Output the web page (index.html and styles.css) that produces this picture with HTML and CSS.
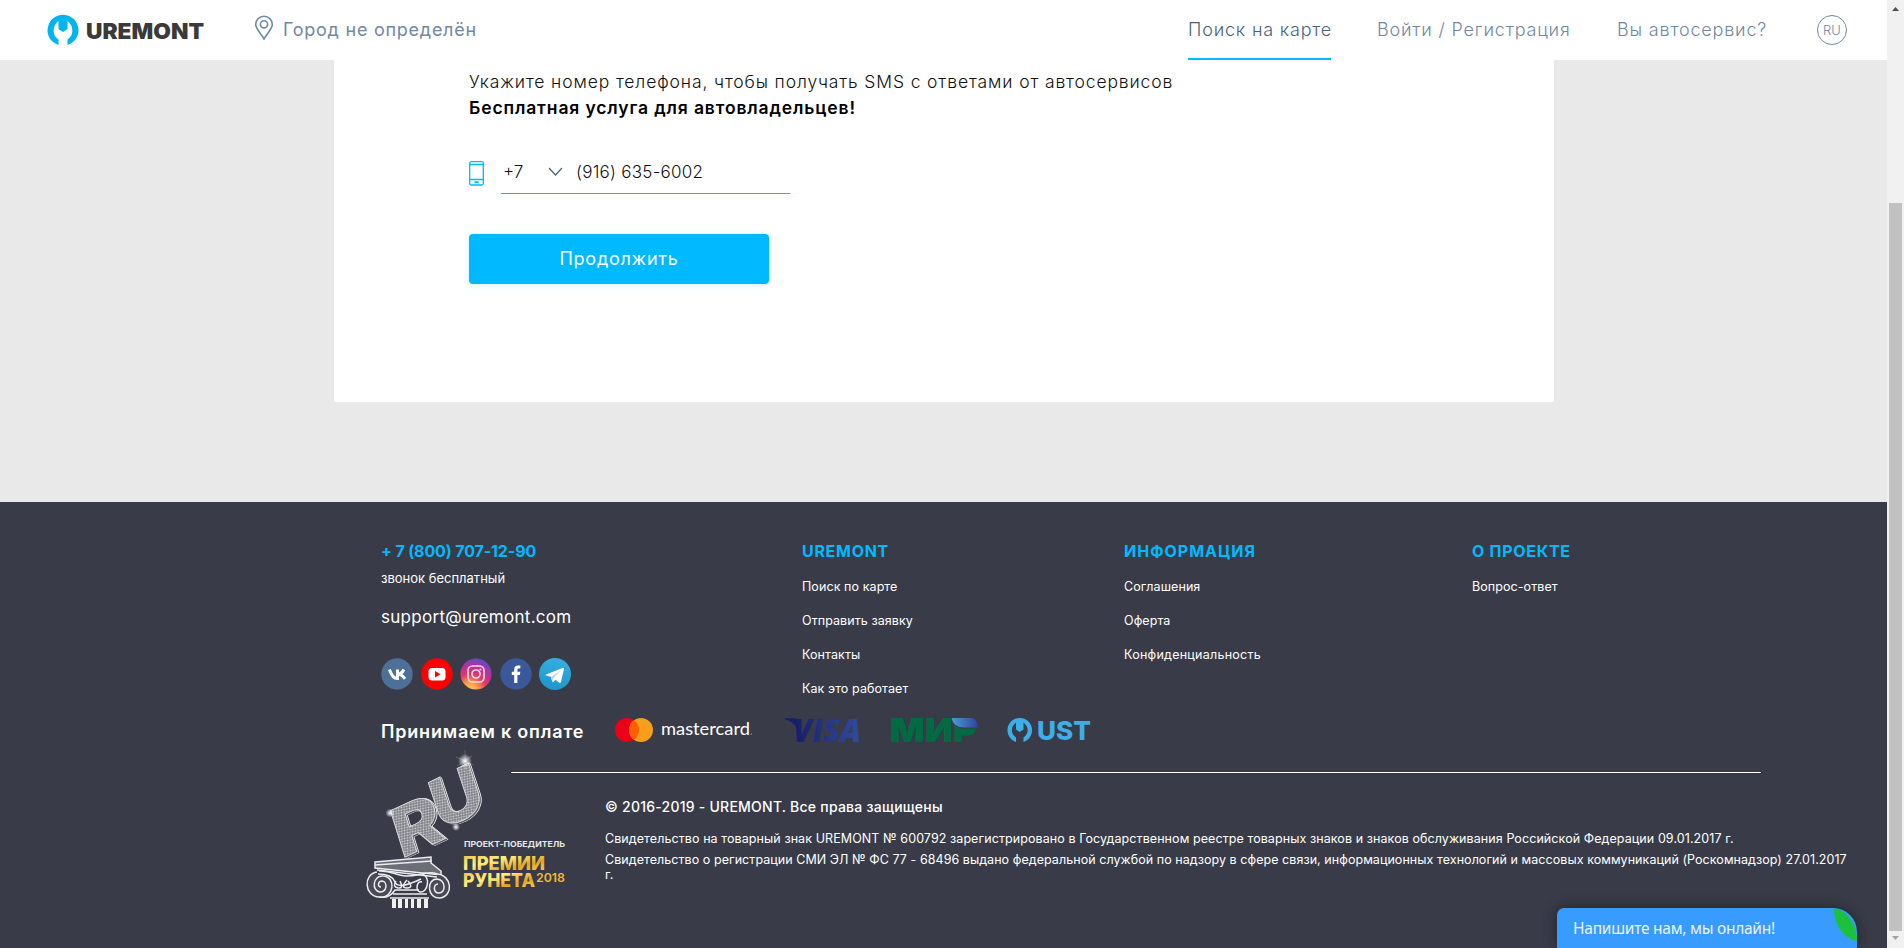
FILE: index.html
```html
<!DOCTYPE html>
<html lang="ru">
<head>
<meta charset="utf-8">
<title>UREMONT</title>
<link rel="stylesheet" href="styles.css">
</head>
<body>
<div class="page">
  <header class="header">
    <a class="logo">
      <svg width="158" height="32" viewBox="0 0 158 32">
        <path fill="#00b4f0" d="M11.500 31A15.500 15.500 0 1 1 20.500 31V25.500C27 21.500 27 12 20.500 7V15L16 18L11.500 15V7C5 12 5 21.500 11.500 25.500Z"/>
        <text class="logo-text" x="39" y="24.500" textLength="118" lengthAdjust="spacingAndGlyphs">UREMONT</text>
      </svg>
    </a>
    <div class="city">
      <svg width="20" height="26" viewBox="0 0 20 26" fill="none" stroke="#7188a3" stroke-width="1.600"><path d="M10 24C6 17.500 1.700 13.500 1.700 9.500a8.300 8.300 0 0 1 16.600 0C18.300 13.500 14 17.500 10 24Z"/><circle cx="10" cy="9.300" r="3.600"/></svg>
      <span>Город не определён</span>
    </div>
    <nav class="nav">
      <a class="nav-link nav-map">Поиск на карте</a>
      <a class="nav-link nav-login">Войти / Регистрация</a>
      <a class="nav-link nav-service">Вы автосервис?</a>
      <a class="lang">RU</a>
    </nav>
  </header>
  <main class="main">
    <section class="card">
      <p class="hint">Укажите номер телефона, чтобы получать SMS с ответами от автосервисов</p>
      <p class="hint-strong">Бесплатная услуга для автовладельцев!</p>
      <div class="phone">
        <svg width="15" height="25" viewBox="0 0 15 25" fill="none" stroke="#00b9ff" stroke-width="1.300"><rect x=".7" y=".7" width="13.600" height="23.300" rx="1.500"/><path d="M1 3.500h13M1 18.500h13"/><path d="M5.500 21.300h4" stroke-width="2"/></svg>
        <div class="field">
          <span class="code">+7</span>
          <svg width="15" height="10" viewBox="0 0 15 10" fill="none" stroke="#49627f" stroke-width="1.200"><path d="M1 1l6.500 7L14 1"/></svg>
          <span class="number">(916) 635-6002</span>
        </div>
      </div>
      <button class="button">Продолжить</button>
    </section>
  </main>
  <footer class="footer">
    <div class="columns">
      <div class="contacts">
        <a class="heading tel">+ 7 (800) 707-12-90</a>
        <span class="free">звонок бесплатный</span>
        <a class="mail">support@uremont.com</a>
        <div class="social">
          <svg width="32" height="32" viewBox="0 0 32 32"><circle cx="16" cy="16" r="15.700" fill="#4d6f98"/><path fill="none" stroke="#fff" stroke-width="3" d="M8.500 11.500C10 16.500 12.500 20.500 16.500 20.500V11.500M23 11.500C21.500 14.500 19.500 16 16.500 16C19.500 16 21.500 17.500 24 20.800"/></svg>
          <svg width="32" height="32" viewBox="0 0 32 32"><circle cx="16" cy="16" r="15.700" fill="#f00"/><rect x="7.500" y="10" width="17" height="12.500" rx="3.500" fill="#fff"/><path fill="#f00" d="M14 13l5.500 3.200L14 19.500z"/></svg>
          <svg width="32" height="32" viewBox="0 0 32 32"><defs><radialGradient id="ig" cx=".3" cy="1.050" r="1.100"><stop offset="0" stop-color="#ffd36b"/><stop offset=".25" stop-color="#fb9b45"/><stop offset=".5" stop-color="#e2366a"/><stop offset=".75" stop-color="#b92f9d"/><stop offset="1" stop-color="#5650c8"/></radialGradient></defs><circle cx="16" cy="16" r="15.500" fill="url(#ig)"/><g fill="none" stroke="#f8dcea" stroke-width="1.700"><rect x="8" y="8" width="16" height="16" rx="4.500"/><circle cx="16" cy="16" r="4"/></g><circle cx="20.500" cy="11.500" r="1.100" fill="#f8dcea"/></svg>
          <svg width="32" height="32" viewBox="0 0 32 32"><circle cx="16" cy="16" r="15.700" fill="#3b5998"/><path fill="#fff" d="M14.200 25V17h-2.400v-3.200h2.400v-2.300c0-2.800 1.500-3.900 3.800-3.900h2.300v3h-1.500c-1.100 0-1.400.5-1.400 1.400v1.800h2.900l-.4 3.200h-2.500v8z"/></svg>
          <svg width="32" height="32" viewBox="0 0 32 32"><defs><linearGradient id="tg" x1=".6" y1="0" x2=".4" y2="1"><stop offset="0" stop-color="#37aee2"/><stop offset="1" stop-color="#1e96c8"/></linearGradient></defs><circle cx="16" cy="16" r="16" fill="url(#tg)"/><path fill="#fff" d="M7 16.500L24 9.800c.7-.2 1.200.2 1 1.100l-3 13.200c-.2.900-.8 1.100-1.600.6l-4-3-2.200 2.300c-.4.300-.8.100-.9-.4l-1.500-4.800-4.600-1.400c-.9-.3-.9-.8-.2-.9z"/><path fill="#b9d5e8" d="M12 19l9.500-6.300-7.200 7.500-.8 4z"/></svg>
        </div>
      </div>
      <div class="column column-main">
        <h3 class="heading">UREMONT</h3>
        <a>Поиск по карте</a><a>Отправить заявку</a><a>Контакты</a><a>Как это работает</a>
      </div>
      <div class="column column-info">
        <h3 class="heading head-info">ИНФОРМАЦИЯ</h3>
        <a>Соглашения</a><a>Оферта</a><a class="privacy">Конфиденциальность</a>
      </div>
      <div class="column">
        <h3 class="heading">О ПРОЕКТЕ</h3>
        <a>Вопрос-ответ</a>
      </div>
    </div>
    <div class="payments">
      <span class="pay-title">Принимаем к оплате</span>
      <svg class="mastercard" width="138" height="26" viewBox="0 0 138 26"><circle cx="13" cy="13" r="12" fill="#eb001b"/><circle cx="27" cy="13" r="12" fill="#f79e1b"/><path fill="#ff5f00" d="M20 3.200a12 12 0 0 1 0 19.600a12 12 0 0 1 0-19.600z"/><text class="mc-text" x="47" y="17.500" textLength="89" lengthAdjust="spacingAndGlyphs">mastercard</text><circle cx="137.300" cy="17" r=".5" fill="#ddd"/></svg>
      <svg class="visa" width="78" height="26" viewBox="0 0 78 26"><defs><linearGradient id="vg"><stop offset="0" stop-color="#151c66"/><stop offset=".5" stop-color="#263685"/><stop offset="1" stop-color="#304b9f"/></linearGradient></defs><path fill="#171f69" d="M0 2.200V1.300H11l3 13C11 8 6 3.800 0 2.200z"/><text class="visa-text" x="8" y="24.500" textLength="68" lengthAdjust="spacingAndGlyphs" fill="url(#vg)">VISA</text></svg>
      <svg class="mir" width="88" height="26" viewBox="0 0 88 26"><defs><linearGradient id="mg"><stop offset="0" stop-color="#4e9ddb"/><stop offset="1" stop-color="#2c449c"/></linearGradient></defs><text class="mir-text" x="-1" y="25" textLength="87" lengthAdjust="spacingAndGlyphs">МИР</text><path fill="#006b43" d="M64 12h21q-2 6.500-9 6.500H64z"/><path fill="url(#mg)" stroke="#393c48" d="M60 .5h19c5.500 0 9 4.500 8 10.500H73C66 11 61 7 60 .5z"/></svg>
      <svg class="ust" width="86" height="26" viewBox="0 0 86 26"><path fill="#3daee9" d="M9 25A12.300 12.300 0 1 1 16.500 25V20.500C22 17 22 9.500 16.500 5.500V12.500L12.700 15L9 12.500V5.500C3.500 9.500 3.500 17 9 20.500Z"/><text class="ust-text" x="30" y="22.500" textLength="54" lengthAdjust="spacingAndGlyphs">UST</text></svg>
    </div>
    <div class="bottom">
      <svg class="award" width="210" height="160" viewBox="0 0 210 160">
        <defs>
          <pattern id="mesh" width="2.400" height="2.400" patternUnits="userSpaceOnUse" patternTransform="rotate(15)"><rect width="2.400" height="2.400" fill="#777a81"/><circle cx="1.200" cy="1.200" r=".85" fill="#d5d5d7"/></pattern>
          <linearGradient id="gold" x2=".9" y2="1"><stop offset="0" stop-color="#f2b92d"/><stop offset=".4" stop-color="#fff080"/><stop offset=".7" stop-color="#e6a51e"/><stop offset="1" stop-color="#f7d34c"/></linearGradient>
          <radialGradient id="spark"><stop offset="0" stop-color="#fff"/><stop offset=".35" stop-color="#fff" stop-opacity=".65"/><stop offset="1" stop-color="#fff" stop-opacity="0"/></radialGradient>
        </defs>
        <g class="ru">
          <text transform="matrix(1.080 -.5 .31 1 36 109)">R</text>
          <text transform="matrix(1.020 -.5 .33 1 75 81)">U</text>
        </g>
        <circle cx="100" cy="11" r="7" fill="url(#spark)"/><circle cx="25" cy="63" r="4.500" fill="url(#spark)"/><circle cx="91" cy="77" r="4" fill="url(#spark)"/>
        <path stroke="#fff" stroke-width=".4" opacity=".5" d="M100 0v19M91 7l18 8M92 16l15-10"/>
        <g fill="none" stroke="#ececee" stroke-width="1.500">
          <path fill="#6b6e76" d="M10 112L66 107V113L76 121V125L10 118z"/>
          <path d="M10 115l57-4M12 120L72 127"/>
          <path fill="#484b56" d="M12 122C-2 124-1 146 14 147C29 149 32 127 18 126C8 125 6 141 15 142C22 142 23 132 17 131C13 131 12 137 16 137"/>
          <path d="M14 121C30 120 32 129 52 125Q66 121 72 124M13 124Q27 124 30 132T56 129M14 147Q24 149 30 140H54"/>
          <path fill="#484b56" d="M72 124C87 125 89 146 75 148C62 149 61 129 72 129C81 130 81 143 74 143C68 143 68 134 73 134"/>
          <path d="M57 124C66 126 63 143 55 142C50 140 52 130 57 132M31 131q-4 6 2 7t2-7M42 130q-7 8 0 8t1-7"/>
          <path d="M25 148H64M28 144H62"/>
        </g>
        <path fill="#f0f0f0" d="M27 149h4v9h-4zM33 149h4v9h-4zM40 149h3v9h-3zM46 149h3v9h-3zM52 149h4v9h-4zM59 149h4v9h-4z"/>
        <text class="award-small" x="99" y="97" textLength="101" lengthAdjust="spacingAndGlyphs">ПРОЕКТ-ПОБЕДИТЕЛЬ</text>
        <text class="award-big" x="98" y="119.500" textLength="82" lengthAdjust="spacingAndGlyphs">ПРЕМИИ</text>
        <text class="award-big" x="98" y="137" textLength="72" lengthAdjust="spacingAndGlyphs">РУНЕТА</text>
        <text class="award-year" x="171" y="131.500" textLength="29" lengthAdjust="spacingAndGlyphs">2018</text>
      </svg>
      <div class="legal">
        <p class="copyright">© 2016-2019 - UREMONT. Все права защищены</p>
        <p class="cert cert-mark">Свидетельство на товарный знак UREMONT № 600792 зарегистрировано в Государственном реестре товарных знаков и знаков обслуживания Российской Федерации 09.01.2017 г.</p>
        <p class="cert cert-media">Свидетельство о регистрации СМИ ЭЛ № ФС 77 - 68496 выдано федеральной службой по надзору в сфере связи, информационных технологий и массовых коммуникаций (Роскомнадзор) 27.01.2017<br>г.</p>
      </div>
    </div>
  </footer>
</div>
<div class="scrollbar">
  <svg width="9" height="5" viewBox="0 0 9 5"><path fill="#505050" d="M1 5l3.500-4L8 5z"/></svg>
  <div class="thumb"></div>
  <svg width="9" height="5" viewBox="0 0 9 5"><path fill="#a3a3a3" d="M1 0l3.500 4L8 0z"/></svg>
</div>
<div class="chat">
  <span>Напишите нам, мы онлайн!</span>
  <svg class="leaf" width="23" height="33" viewBox="0 0 23 33"><path fill="#1bc13c" d="M0 0C14 3 23 17 23 33C9 30 0 17 0 0z"/></svg>
</div>
</body>
</html>
```
FILE: styles.css
```css
* { box-sizing: border-box; }
body {
  margin: 0;
  display: flex;
  height: 948px;
  overflow: hidden;
  font-family: Inter, "Open Sans", sans-serif;
  background: #e9e9e9;
}
p, h3 { margin: 0; }
svg { display: block; flex: none; overflow: visible; }
.page { width: 1887px; flex: none; display: flex; flex-direction: column; white-space: nowrap; }

.header { height: 60px; flex: none; background: #fff; display: flex; padding: 0 40px 0 47px; color: #7188a3; }
.logo { padding-top: 14px; width: 207px; }
.logo-text { font-weight: 900; font-size: 22px; fill: #3a3a3a; }
.city { display: flex; gap: 9px; padding-top: 15px; font-size: 18px; line-height: 29px; letter-spacing: .75px; }
.nav { margin-left: auto; display: flex; font-size: 18px; font-weight: 300; line-height: 60px; }
.nav-link { flex: none; height: 60px; letter-spacing: .82px; }
.nav-map { width: 143px; color: #49627f; border-bottom: 2px solid #00b9ff; margin-right: 46px; }
.nav-login { width: 240px; }
.nav-service { width: 200px; }
.lang { width: 30px; height: 30px; margin-top: 15px; border: 1px solid #7188a3; border-radius: 50%; font-size: 13px; line-height: 28px; text-align: center; }

.main { height: 442px; flex: none; padding-left: 334px; }
.card { width: 1220px; height: 342px; background: #fff; padding: 9px 0 0 135px; color: #111; }
.hint { font-size: 17.500px; font-weight: 300; line-height: 26px; letter-spacing: .88px; }
.hint-strong { font-size: 17.500px; font-weight: 600; line-height: 26px; color: #000; letter-spacing: .87px; }
.phone { display: flex; gap: 17px; margin-top: 31px; align-items: center; height: 42px; }
.field { width: 289px; height: 42px; border-bottom: 1px solid #00b9ff; display: flex; align-items: center; padding: 0 0 2px 2px; font-size: 17px; font-weight: 300; }
.code { width: 45px; }
.number { padding-left: 13px; letter-spacing: .25px; }
.button { display: block; width: 300px; height: 50px; margin-top: 40px; border: 0; border-radius: 4px; background: #00b9ff; color: #fff; font: 400 18px/50px Inter, sans-serif; letter-spacing: .75px; padding: 0; box-shadow: 0 1px 6px rgba(0, 185, 255, .2); }

.footer { height: 446px; background: #393c48; color: #fff; }
.columns { display: flex; padding: 37px 0 0 381px; height: 211px; }
.contacts { width: 421px; display: flex; flex-direction: column; }
.heading { font-size: 16px; font-weight: 700; line-height: 25px; color: #00b9ff; letter-spacing: .7px; }
.tel { letter-spacing: -.13px; }
.head-info { letter-spacing: 1px; }
.free { font-size: 13px; line-height: 20px; margin-top: 4px; }
.mail { font-size: 17px; line-height: 24px; margin-top: 17px; letter-spacing: .28px; }
.social { display: flex; gap: 7.600px; margin-top: 29px; }
.column { display: flex; flex-direction: column; font-size: 12.500px; line-height: 34px; letter-spacing: .08px; }
.column .heading { margin-bottom: 6px; }
.privacy { letter-spacing: .25px; }
.column-main { width: 322px; }
.column-info { width: 348px; }
.payments { display: flex; height: 46px; padding: 4px 0 0 381px; }
.pay-title { width: 233px; font-size: 18px; font-weight: 600; line-height: 30px; letter-spacing: .8px; }
.mastercard { margin-right: 33px; }
.visa { margin-right: 28px; }
.mir { margin-right: 28px; }
.mc-text { font-family: Lato, sans-serif; font-size: 17px; fill: #fff; }
.visa-text { font-family: "Open Sans", sans-serif; font-size: 32px; font-weight: 800; font-style: italic; }
.mir-text { font-size: 33px; font-weight: 900; fill: #006b43; }
.ust-text { font-size: 26px; font-weight: 800; fill: #3daee9; }
.bottom { display: flex; padding-left: 365px; }
.award { margin-top: -9px; }
.ru { filter: drop-shadow(1.5px 1px 0 #50535d) drop-shadow(1px .5px 0 #e6e6e8); }
.ru text { font-size: 64px; font-weight: 800; fill: url(#mesh); stroke: #ddd; stroke-width: .8px; }
.award-small { font-size: 8px; font-weight: 700; fill: #e6e6e6; }
.award-big { font-size: 19px; font-weight: 800; fill: url(#gold); }
.award-year { font-size: 12px; font-weight: 600; fill: #eebb35; }
.legal { margin: 13px 0 0 -64px; width: 1250px; border-top: 1px solid #fff; padding: 23px 0 0 94px; }
.copyright { font-size: 14px; font-weight: 500; line-height: 22px; letter-spacing: .24px; }
.cert { font-size: 12.500px; line-height: 15px; }
.cert-mark { margin-top: 13px; letter-spacing: .08px; }
.cert-media { margin-top: 6px; letter-spacing: .055px; }

.scrollbar { width: 17px; flex: none; background: #f1f1f1; display: flex; flex-direction: column; align-items: center; padding: 6px 0; }
.thumb { width: 13px; height: 728px; margin: 192px 0 5px; background: #c1c1c1; }

.chat { position: absolute; left: 1557px; top: 908px; width: 300px; height: 40px; background: #389bff; border-radius: 7px 24px 0 0; box-shadow: 0 0 14px rgba(0, 0, 0, .45); color: #e9f3ff; font: 15.500px/40px "Noto Sans", sans-serif; letter-spacing: -.25px; padding-left: 16px; white-space: nowrap; overflow: hidden; }
.leaf { position: absolute; right: 0; top: 0; }
```
